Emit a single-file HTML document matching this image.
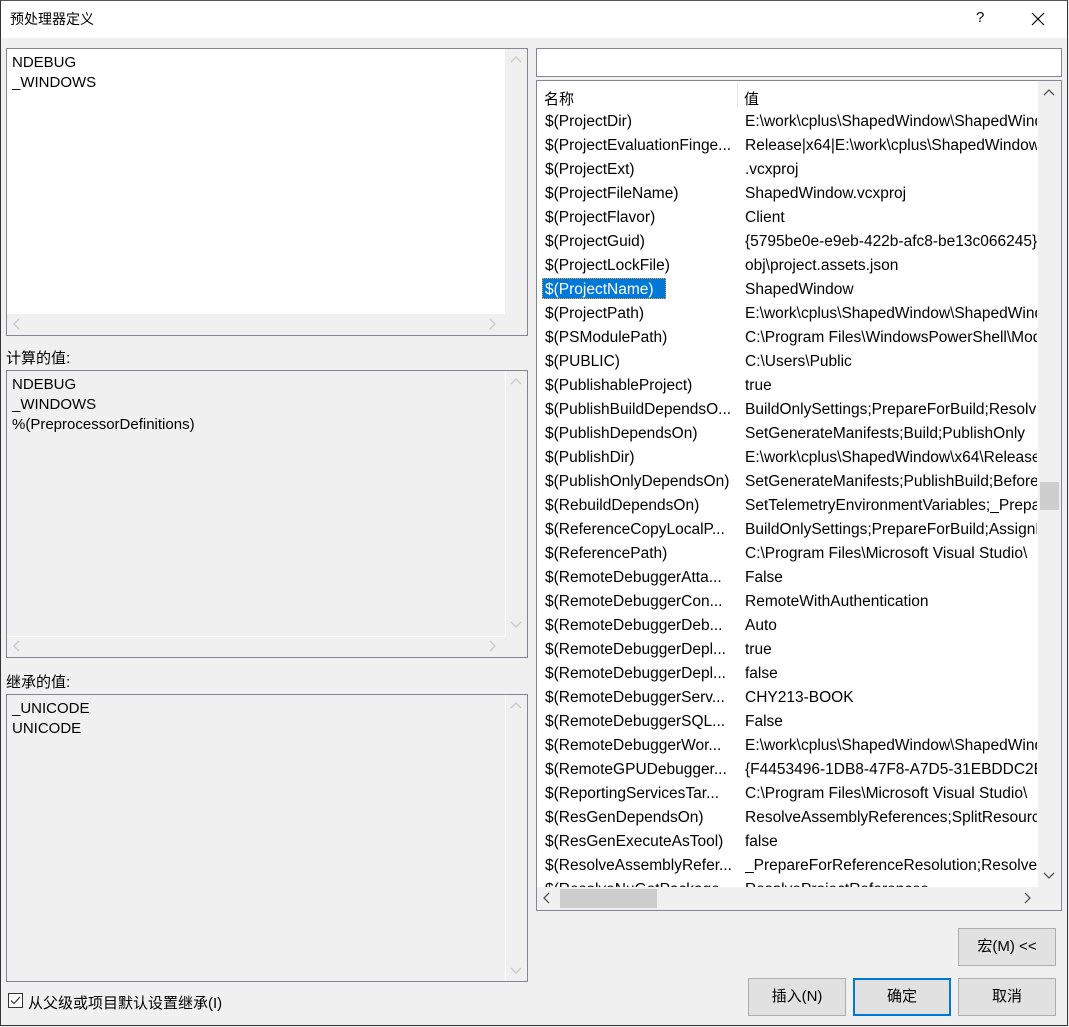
<!DOCTYPE html>
<html><head><meta charset="utf-8"><style>
*{margin:0;padding:0;box-sizing:border-box}
body{width:1069px;height:1027px;background:#f0f0f0;font-family:"Liberation Sans","Noto Sans CJK SC",sans-serif;font-size:15px;color:#000;position:relative;overflow:hidden}
.a{position:absolute}
.win{left:0;top:0;width:1068px;height:1026px;border:1px solid #333;border-top-color:#555}
.title{left:1px;top:1px;width:1066px;height:37px;background:#fff}
.box{border:1px solid #828790;background:#fff}
.dis{background:#f0f0f0}
.txt{line-height:20px}
.vs{background:#f0f0f0}
.row{position:absolute;left:0;height:24px;line-height:24px;white-space:nowrap;width:500px;font-size:15.5px}
.c1{position:absolute;left:8px;width:196px;overflow:hidden}
.c2{position:absolute;left:208px;width:292px;overflow:hidden}
.btn{border:1px solid #adadad;background:#e1e1e1;text-align:center;line-height:35px;font-size:15px}
</style></head><body>
<div class="a win"></div>
<div class="a title"></div>
<div class="a" style="left:10px;top:9px;font-size:14px">预处理器定义</div>
<div class="a" style="left:976px;top:9px;font-size:15px">?</div>
<svg class="a" style="left:1031px;top:12px" width="14" height="14"><path d="M1 1L13 13M13 1L1 13" stroke="#000" stroke-width="1.2"/></svg>

<div class="a box" style="left:6px;top:48px;width:522px;height:288px"></div>
<div class="a txt" style="left:12px;top:53px">NDEBUG<br>_WINDOWS</div>
<div class="a vs" style="left:505px;top:49px;width:22px;height:286px"></div>
<div class="a vs" style="left:7px;top:314px;width:520px;height:21px"></div>
<svg class="a" style="left:509px;top:55px" width="14" height="10"><path d="M2 7L7 2L12 7" stroke="#c8c8c8" fill="none" stroke-width="1.3"/></svg>
<svg class="a" style="left:12px;top:318px" width="10" height="12"><path d="M7 1L2 6L7 11" stroke="#c8c8c8" fill="none" stroke-width="1.3"/></svg>
<svg class="a" style="left:487px;top:318px" width="10" height="12"><path d="M3 1L8 6L3 11" stroke="#c8c8c8" fill="none" stroke-width="1.3"/></svg>

<div class="a" style="left:6px;top:347px">计算的值:</div>
<div class="a box dis" style="left:6px;top:370px;width:522px;height:288px"></div>
<div class="a txt" style="left:12px;top:375px">NDEBUG<br>_WINDOWS<br>%(PreprocessorDefinitions)</div>
<div class="a" style="left:505px;top:371px;width:1px;height:265px;background:#fff"></div>
<svg class="a" style="left:509px;top:377px" width="14" height="10"><path d="M2 7L7 2L12 7" stroke="#c8c8c8" fill="none" stroke-width="1.3"/></svg>
<svg class="a" style="left:509px;top:620px" width="14" height="10"><path d="M2 2L7 7L12 2" stroke="#c8c8c8" fill="none" stroke-width="1.3"/></svg>
<div class="a" style="left:7px;top:636px;width:498px;height:1px;background:#fff"></div>
<svg class="a" style="left:12px;top:640px" width="10" height="12"><path d="M7 1L2 6L7 11" stroke="#c8c8c8" fill="none" stroke-width="1.3"/></svg>
<svg class="a" style="left:487px;top:640px" width="10" height="12"><path d="M3 1L8 6L3 11" stroke="#c8c8c8" fill="none" stroke-width="1.3"/></svg>

<div class="a" style="left:6px;top:671px">继承的值:</div>
<div class="a box dis" style="left:6px;top:694px;width:522px;height:288px"></div>
<div class="a txt" style="left:12px;top:699px">_UNICODE<br>UNICODE</div>
<div class="a" style="left:505px;top:695px;width:1px;height:286px;background:#fff"></div>
<svg class="a" style="left:509px;top:701px" width="14" height="10"><path d="M2 7L7 2L12 7" stroke="#c8c8c8" fill="none" stroke-width="1.3"/></svg>
<svg class="a" style="left:509px;top:966px" width="14" height="10"><path d="M2 2L7 7L12 2" stroke="#c8c8c8" fill="none" stroke-width="1.3"/></svg>

<div class="a" style="left:8px;top:993px;width:15px;height:15px;border:1px solid #333;background:#fff"></div>
<svg class="a" style="left:9px;top:994px" width="13" height="13"><path d="M2 6.5L5 9.5L11 3" stroke="#333" fill="none" stroke-width="1.2"/></svg>
<div class="a" style="left:28px;top:992px">从父级或项目默认设置继承(I)</div>

<div class="a box" style="left:536px;top:48px;width:526px;height:29px"></div>
<div class="a box" style="left:536px;top:80px;width:526px;height:831px"></div>
<div class="a" style="left:544px;top:88px">名称</div>
<div class="a" style="left:737px;top:82px;width:1px;height:25px;background:#e5e5e5"></div>
<div class="a" style="left:744px;top:88px">值</div>
<div class="a vs" style="left:1038px;top:81px;width:23px;height:806px"></div>
<svg class="a" style="left:1042px;top:88px" width="14" height="10"><path d="M2 7L7 2L12 7" stroke="#555" fill="none" stroke-width="1.3"/></svg>
<svg class="a" style="left:1042px;top:871px" width="14" height="10"><path d="M2 2L7 7L12 2" stroke="#555" fill="none" stroke-width="1.3"/></svg>
<div class="a" style="left:1040px;top:482px;width:19px;height:28px;background:#cdcdcd"></div>
<div class="a vs" style="left:537px;top:887px;width:524px;height:23px"></div>
<div class="a" style="left:560px;top:889px;width:97px;height:19px;background:#cdcdcd"></div>
<svg class="a" style="left:542px;top:892px" width="10" height="12"><path d="M7 1L2 6L7 11" stroke="#555" fill="none" stroke-width="1.3"/></svg>
<svg class="a" style="left:1022px;top:892px" width="10" height="12"><path d="M3 1L8 6L3 11" stroke="#555" fill="none" stroke-width="1.3"/></svg>

<div class="a" style="left:537px;top:108px;width:501px;height:779px;overflow:hidden">
<div class="a" style="left:5px;top:170px;width:124px;height:21px;background:#0078d7;outline:1px dotted #f0a030;outline-offset:-1px"></div>
<div style="position:absolute;left:0;top:2px;width:501px;height:800px">
<div class="row" style="top:0"><div class="c1">$(ProjectDir)</div><div class="c2">E:\work\cplus\ShapedWindow\ShapedWindow\</div></div>
<div class="row" style="top:24px"><div class="c1">$(ProjectEvaluationFinge...</div><div class="c2">Release|x64|E:\work\cplus\ShapedWindow</div></div>
<div class="row" style="top:48px"><div class="c1">$(ProjectExt)</div><div class="c2">.vcxproj</div></div>
<div class="row" style="top:72px"><div class="c1">$(ProjectFileName)</div><div class="c2">ShapedWindow.vcxproj</div></div>
<div class="row" style="top:96px"><div class="c1">$(ProjectFlavor)</div><div class="c2">Client</div></div>
<div class="row" style="top:120px"><div class="c1">$(ProjectGuid)</div><div class="c2">{5795be0e-e9eb-422b-afc8-be13c066245}</div></div>
<div class="row" style="top:144px"><div class="c1">$(ProjectLockFile)</div><div class="c2">obj\project.assets.json</div></div>
<div class="row" style="top:168px"><div class="c1" style="color:#fff">$(ProjectName)</div><div class="c2">ShapedWindow</div></div>
<div class="row" style="top:192px"><div class="c1">$(ProjectPath)</div><div class="c2">E:\work\cplus\ShapedWindow\ShapedWindow\</div></div>
<div class="row" style="top:216px"><div class="c1">$(PSModulePath)</div><div class="c2">C:\Program Files\WindowsPowerShell\Modules</div></div>
<div class="row" style="top:240px"><div class="c1">$(PUBLIC)</div><div class="c2">C:\Users\Public</div></div>
<div class="row" style="top:264px"><div class="c1">$(PublishableProject)</div><div class="c2">true</div></div>
<div class="row" style="top:288px"><div class="c1">$(PublishBuildDependsO...</div><div class="c2">BuildOnlySettings;PrepareForBuild;Resolve</div></div>
<div class="row" style="top:312px"><div class="c1">$(PublishDependsOn)</div><div class="c2">SetGenerateManifests;Build;PublishOnly</div></div>
<div class="row" style="top:336px"><div class="c1">$(PublishDir)</div><div class="c2">E:\work\cplus\ShapedWindow\x64\Release\</div></div>
<div class="row" style="top:360px"><div class="c1">$(PublishOnlyDependsOn)</div><div class="c2">SetGenerateManifests;PublishBuild;BeforePublish</div></div>
<div class="row" style="top:384px"><div class="c1">$(RebuildDependsOn)</div><div class="c2">SetTelemetryEnvironmentVariables;_PrepareForBuild</div></div>
<div class="row" style="top:408px"><div class="c1">$(ReferenceCopyLocalP...</div><div class="c2">BuildOnlySettings;PrepareForBuild;AssignProject</div></div>
<div class="row" style="top:432px"><div class="c1">$(ReferencePath)</div><div class="c2">C:\Program Files\Microsoft Visual Studio\</div></div>
<div class="row" style="top:456px"><div class="c1">$(RemoteDebuggerAtta...</div><div class="c2">False</div></div>
<div class="row" style="top:480px"><div class="c1">$(RemoteDebuggerCon...</div><div class="c2">RemoteWithAuthentication</div></div>
<div class="row" style="top:504px"><div class="c1">$(RemoteDebuggerDeb...</div><div class="c2">Auto</div></div>
<div class="row" style="top:528px"><div class="c1">$(RemoteDebuggerDepl...</div><div class="c2">true</div></div>
<div class="row" style="top:552px"><div class="c1">$(RemoteDebuggerDepl...</div><div class="c2">false</div></div>
<div class="row" style="top:576px"><div class="c1">$(RemoteDebuggerServ...</div><div class="c2">CHY213-BOOK</div></div>
<div class="row" style="top:600px"><div class="c1">$(RemoteDebuggerSQL...</div><div class="c2">False</div></div>
<div class="row" style="top:624px"><div class="c1">$(RemoteDebuggerWor...</div><div class="c2">E:\work\cplus\ShapedWindow\ShapedWindow\</div></div>
<div class="row" style="top:648px"><div class="c1">$(RemoteGPUDebugger...</div><div class="c2">{F4453496-1DB8-47F8-A7D5-31EBDDC2EB}</div></div>
<div class="row" style="top:672px"><div class="c1">$(ReportingServicesTar...</div><div class="c2">C:\Program Files\Microsoft Visual Studio\</div></div>
<div class="row" style="top:696px"><div class="c1">$(ResGenDependsOn)</div><div class="c2">ResolveAssemblyReferences;SplitResourcesByCulture</div></div>
<div class="row" style="top:720px"><div class="c1">$(ResGenExecuteAsTool)</div><div class="c2">false</div></div>
<div class="row" style="top:744px"><div class="c1">$(ResolveAssemblyRefer...</div><div class="c2">_PrepareForReferenceResolution;ResolveAssembly</div></div>
<div class="row" style="top:768px"><div class="c1">$(ResolveNuGetPackage...</div><div class="c2">ResolveProjectReferences</div></div>
</div>
</div>

<div class="a btn" style="left:958px;top:928px;width:98px;height:38px">宏(M) &lt;&lt;</div>
<div class="a btn" style="left:748px;top:978px;width:98px;height:38px">插入(N)</div>
<div class="a btn" style="left:853px;top:978px;width:98px;height:38px;border:2px solid #0078d7;line-height:33px">确定</div>
<div class="a btn" style="left:958px;top:978px;width:98px;height:38px">取消</div>
</body></html>
